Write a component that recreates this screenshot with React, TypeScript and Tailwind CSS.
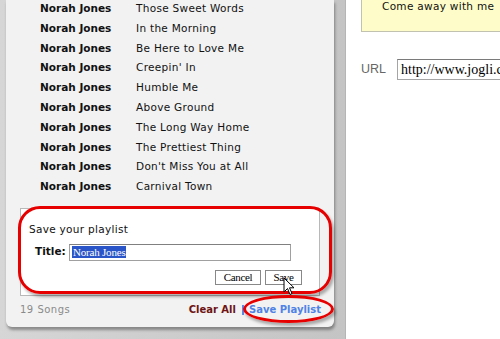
import React from 'react'

const songs = [
  'Those Sweet Words',
  'In the Morning',
  'Be Here to Love Me',
  "Creepin' In",
  'Humble Me',
  'Above Ground',
  'The Long Way Home',
  'The Prettiest Thing',
  "Don't Miss You at All",
  'Carnival Town',
]

const verdana = "font-['DejaVu_Sans',Verdana,sans-serif]"

export default function App() {
  return (
    <div className="relative flex w-[500px] h-[339px] overflow-hidden bg-white">
      {/* Playlist panel on gray backdrop */}
      <div className="flex w-[346px] h-full bg-gradient-to-r from-[#d6d6d6] to-[#c4c4c4] pl-[6px] pr-[11px] border-r border-[#b5b5b5]">
        <div className="relative w-[329px] h-[327px] bg-[#f2f2f2] rounded-b-[6px] shadow-[1px_3px_3px_rgba(0,0,0,0.35)] flex flex-col">
          {/* Song rows */}
          <div className={`-mt-[1px] flex flex-col text-[10.5px] text-[#111] ${verdana}`}>
            {songs.map(s => (
              <div key={s} className="flex items-center h-[19.8px]">
                <span className="shrink-0 w-[130px] pl-[34px] font-bold whitespace-nowrap">Norah Jones</span>
                <span className="whitespace-nowrap tracking-[0.3px]">{s}</span>
              </div>
            ))}
          </div>

          {/* Save dialog */}
          <div className="mt-[11px] ml-[14px] w-[300px] h-[88px] bg-white border border-[#b8b8b8] flex flex-col">
            <div className={`mt-[13px] ml-[8px] text-[10.5px] text-[#111] tracking-[0.3px] ${verdana}`}>Save your playlist</div>
            <div className="flex items-center mt-[6px]">
              <span className={`ml-[14px] w-[34px] text-[10.5px] font-bold text-[#111] ${verdana}`}>Title:</span>
              <div className="w-[222px] h-[17px] border border-[#a0a0a0] border-t-[#808080] bg-white flex items-center pl-[2px]">
                <span className="bg-[#2a55c8] text-white text-[11px] leading-[12px] px-[1px] font-['Liberation_Serif',serif] tracking-[-0.2px]">Norah Jones</span>
              </div>
            </div>
            <div className="flex justify-end gap-[4px] mt-[9px] pr-[17px]">
              <div className="w-[46px] h-[15px] border border-[#888] bg-white flex items-center justify-center text-[11px] font-['Liberation_Serif',serif] text-black tracking-[-0.3px]">Cancel</div>
              <div className="w-[37px] h-[15px] border border-[#888] bg-white flex items-center justify-center text-[11px] font-['Liberation_Serif',serif] text-black tracking-[-0.3px]">Save</div>
            </div>
          </div>

          {/* Footer */}
          <div className={`flex items-center mt-[7px] h-[14px] text-[10px] ${verdana}`}>
            <span className="ml-[14px] text-[#8a8a8a] tracking-[0.5px]">19 Songs</span>
            <span className="ml-auto font-bold text-[#6e1414]">Clear All</span>
            <span className="ml-[6px] w-[2px] h-[10px] bg-[#5b8be6]" />
            <span className="ml-[5px] mr-[13px] font-bold text-[#4f82e6]">Save Playlist</span>
          </div>

          {/* Red annotation marks */}
          <div className="absolute left-[12px] top-[206px] w-[314px] h-[88px] border-[3px] border-[#e60000] rounded-[22px] shadow-[2px_3px_3px_rgba(0,0,0,0.3)]" />
          <div className="absolute left-[237px] top-[295px] w-[91px] h-[28px] border-[3px] border-[#e60000] rounded-[50%] shadow-[2px_3px_3px_rgba(0,0,0,0.3)]" />

          {/* Mouse cursor */}
          <svg className="absolute left-[277px] top-[277px]" width="12" height="20" viewBox="0 0 12 20">
            <path d="M1 1 L1 15 L4.5 11.5 L7 17.5 L9 16.5 L6.5 10.8 L11 10.8 Z" fill="#fff" stroke="#000" strokeWidth="1" strokeLinejoin="round" />
          </svg>
        </div>
      </div>

      {/* Right side */}
      <div className="flex flex-col pl-[15px]">
        <div className={`w-[150px] h-[32px] bg-[#fefdca] border border-t-0 border-[#c2c2b0] pl-[20px] text-[10.5px] text-[#111] tracking-[0.3px] ${verdana}`}>
          <div className="-mt-[1px]">Come away with me</div>
        </div>
        <div className="flex items-center mt-[27px]">
          <span className="text-[12.5px] text-[#666] font-['Liberation_Sans',Arial,sans-serif] w-[36px]">URL</span>
          <div className="w-[110px] h-[21px] border border-[#a5a5a5] border-t-[#7a7a7a] bg-white pl-[3px] flex items-center text-[14px] text-black font-['Liberation_Serif',serif] whitespace-nowrap overflow-hidden">
            http://www.jogli.com
          </div>
        </div>
      </div>
    </div>
  )
}
